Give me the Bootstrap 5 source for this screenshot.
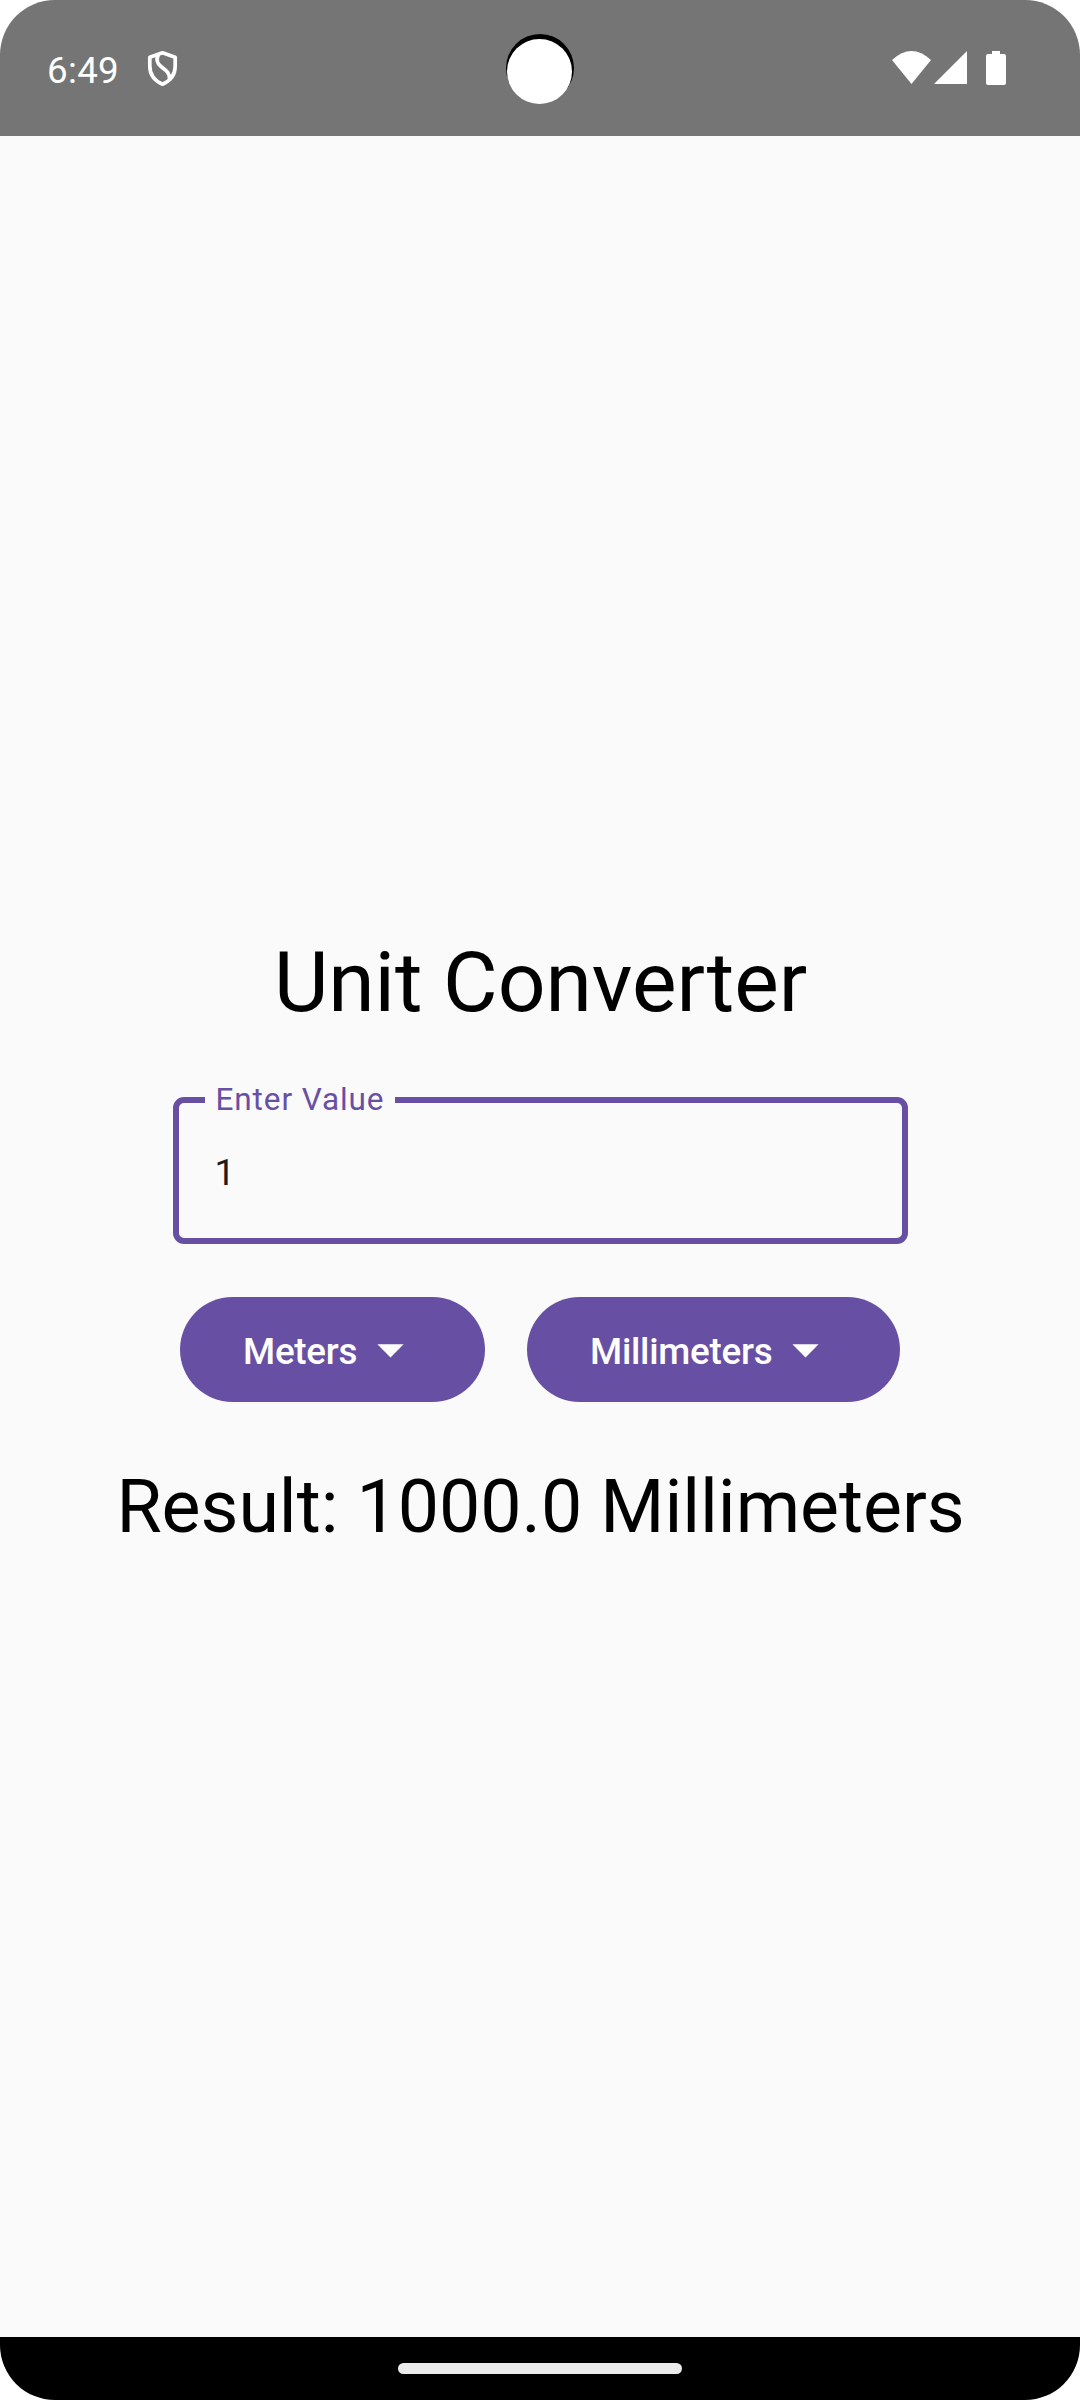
<!DOCTYPE html>
<html lang="en">
<head>
<meta charset="utf-8">
<meta name="viewport" content="width=device-width, initial-scale=1">
<title>Unit Converter</title>
<link href="https://cdn.jsdelivr.net/npm/bootstrap@5.3.0/dist/css/bootstrap.min.css" rel="stylesheet">
<style>
:root { --violet: #6750a4; --surface: #fafafa; }
body { font-family: Roboto, "Liberation Sans", sans-serif; background: #fff; color: #000; }
svg { display: block; flex: none; }
.device { width: 1080px; height: 2400px; border-radius: 55px; background: var(--surface); }
.status { height: 136px; background: #757575; padding: 0 73px 0 47px; }
.clock { font-size: 36.75px; line-height: 44px; padding-top: 5px; letter-spacing: .3px; }
.shield { margin: 2px 0 0 25px; }
.camera { left: 506px; top: 34px; }
.screen { padding-top: 798px; }
.title { font-size: 84px; line-height: 98px; font-weight: 400; letter-spacing: -.08px; margin: 0; padding-left: 1px; }
.field { width: 735px; height: 147px; margin-top: 65px; border: 6px solid var(--violet); border-radius: 11px; padding: 5px 36px 0; }
.field-label { left: 26px; top: -22px; padding: 0 11px; background: var(--surface); color: var(--violet); font-size: 31.5px; line-height: 38px; letter-spacing: .9px; width: 190px; white-space: nowrap; }
.field-input, .field-input:focus { background: transparent; font-size: 36.75px; color: #1d1b20; box-shadow: none; line-height: 44px; }
.units { gap: 42px; margin-top: 53px; }
.unit { --bs-btn-bg: #6750a4; --bs-btn-color: #fff; --bs-btn-hover-bg: #5c4794; --bs-btn-hover-color: #fff; height: 105px; padding: 0 63px; border: 0; font-size: 36.75px; font-weight: 500; line-height: 44px; letter-spacing: -.25px; }
.unit span { padding-top: 4px; }
.unit-from { width: 305px; }
.unit-to { width: 373px; }
.result { font-size: 73.5px; line-height: 86px; letter-spacing: -.06px; margin: 62px 0 0; padding-left: 1px; white-space: nowrap; }
.gesture { height: 63px; background: #000; }
.pill { width: 284px; height: 11px; border-radius: 6px; background: #ebebeb; }
</style>
</head>
<body>
<div class="device position-relative overflow-hidden d-flex flex-column">
  <header class="status d-flex align-items-center text-white">
    <span class="clock">6:49</span>
    <svg class="shield" width="36" height="40" viewBox="144 50 36 40" fill="none" stroke="#fff" stroke-width="3.7" stroke-linejoin="round"><path d="M162.500 53.800L149.800 58.200V67C149.800 75.500 154.500 81.800 162.500 85.200C170.500 81.800 175.200 75.500 175.200 67V58.200Z"/><path d="M158.500 55.500C155.800 60.500 157.200 64.500 161 67.500C165.500 71 170 73.500 169.500 80"/></svg>
    <svg class="ms-auto" width="116" height="40" viewBox="891 48 116 40" fill="#fff"><path d="M892 60Q911.500 42 931 60L911.500 84Z"/><path d="M934 84L967 51V84Z"/><path d="M992 51h8v3h4a2 2 0 0 1 2 2v27a2 2 0 0 1-2 2h-16a2 2 0 0 1-2-2v-27a2 2 0 0 1 2-2h4z"/></svg>
  </header>
  <svg class="camera position-absolute" width="68" height="71" viewBox="506 34 68 71"><circle cx="540" cy="68" r="34" fill="#000"/><circle cx="539.500" cy="71.500" r="32.500" fill="#fff"/></svg>

  <main class="screen flex-grow-1 d-flex flex-column align-items-center">
    <h1 class="title">Unit Converter</h1>
    <div class="field position-relative d-flex align-items-center">
      <label class="field-label position-absolute" for="amount">Enter Value</label>
      <input class="field-input form-control border-0 rounded-0 p-0" id="amount" type="text" value="1">
    </div>
    <div class="units d-flex">
      <button class="unit unit-from btn rounded-pill d-flex align-items-center justify-content-between" type="button"><span>Meters</span><svg width="63" height="63" viewBox="0 0 24 24" fill="#fff"><path d="M7 10l5 5 5-5z"/></svg></button>
      <button class="unit unit-to btn rounded-pill d-flex align-items-center justify-content-between" type="button"><span>Millimeters</span><svg width="63" height="63" viewBox="0 0 24 24" fill="#fff"><path d="M7 10l5 5 5-5z"/></svg></button>
    </div>
    <p class="result">Result: 1000.0 Millimeters</p>
  </main>

  <footer class="gesture d-flex align-items-center justify-content-center"><div class="pill"></div></footer>
</div>
<script src="https://cdn.jsdelivr.net/npm/bootstrap@5.3.0/dist/js/bootstrap.bundle.min.js"></script>
</body>
</html>
